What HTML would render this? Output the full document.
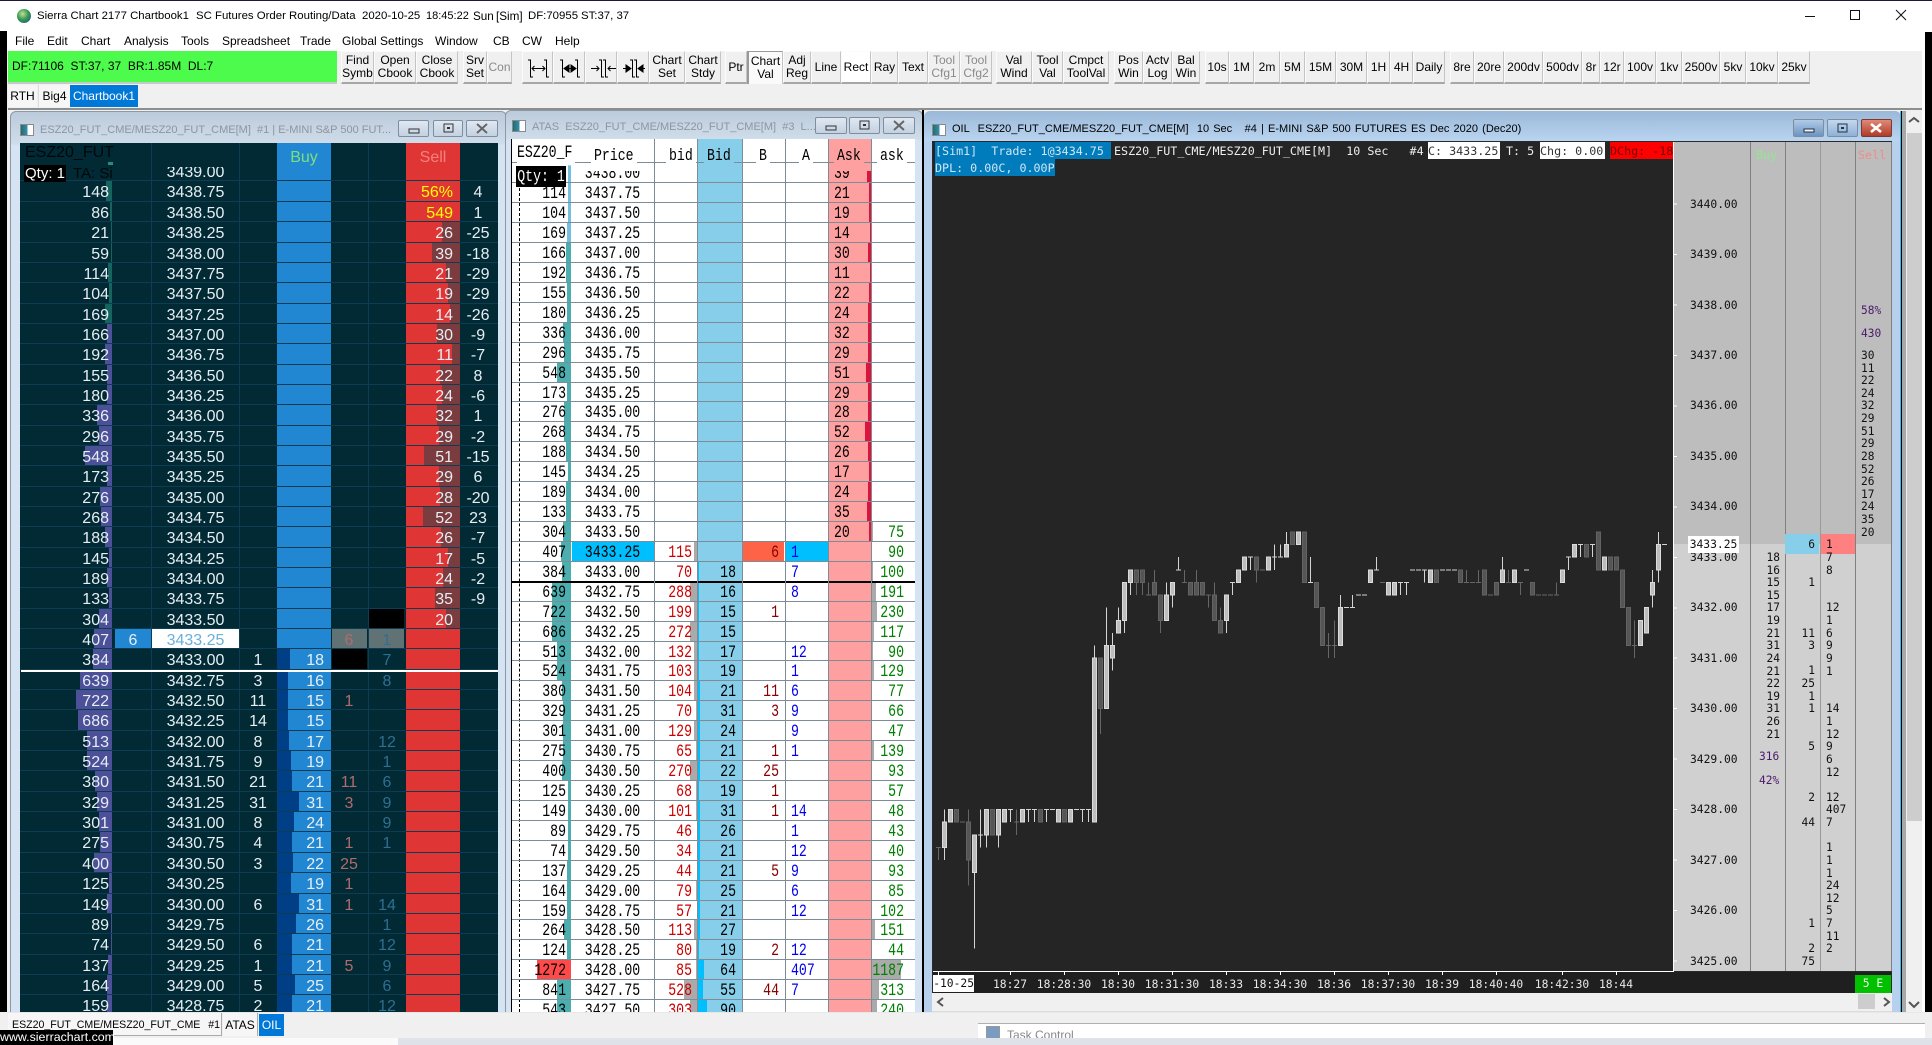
<!DOCTYPE html>
<html><head><meta charset="utf-8"><title>Sierra Chart</title>
<style>
html,body{margin:0;padding:0}
body{position:relative;width:1932px;height:1045px;overflow:hidden;background:#f0f0f0;font:12px "Liberation Sans",sans-serif;color:#000}
div,span,pre{position:absolute;margin:0;white-space:pre}
.rw{white-space:normal}
p{margin:0;position:relative;box-sizing:border-box}
i,b{font-style:normal;font-weight:normal;position:absolute;top:0;white-space:pre}
u{text-decoration:none;position:absolute;top:0;bottom:0}
.k{top:51px;height:33px;box-sizing:border-box;border:1px solid #fbfbfb;border-right:1px solid #c4c4c4;border-bottom:2px solid #a6a6a6;background:#f0f0f0;display:flex;align-items:center;justify-content:center;text-align:center;line-height:13px;font-size:12px;white-space:nowrap}
.dis{color:#8a8a8a}
.m{top:34px;font-size:12px}
.h{top:9px;font-size:11.7px;line-height:15px}
.wb{width:31px;height:17px;box-sizing:border-box;border:1px solid #7f8e9e;border-radius:2px;background:linear-gradient(#e0e8f2,#c3d1e1)}
.wb svg{position:absolute;left:0;top:0}
.ic{width:14px;height:12px;box-sizing:border-box;border:1px solid #8a8a8a;background:linear-gradient(90deg,#1f6f6f 0,#3a8fb0 55%,#fff 55%,#fff 100%)}
/* left ladder */
#l{left:20px;top:143px;width:478px;height:869px;overflow:hidden;background:#012a35;color:#e6eef2;font:16px/20px "Liberation Sans",sans-serif}
#l p{height:20.35px;border-bottom:1px solid #0e3c52}
#l i{top:2px}
#l .q{left:0;width:89px;text-align:right}
#l .p{left:132px;width:87px;text-align:center}
#l .t{left:219px;width:38px;text-align:center}
#l .u{left:257px;width:47px;text-align:right}
#l .b{left:311px;width:36px;text-align:center;color:#b06c6c}
#l .a{left:348px;width:38px;text-align:center;color:#2f6f92}
#l .s{left:386px;width:47px;text-align:right}
#l .d{left:440px;width:36px;text-align:center}
#l .g{right:386px;background:#16645f}
#l .v{right:386px;background:#4b5099}
#l .n{left:257px;background:#003f85}
#l .o{right:38px;background:#7a3c3e}
/* mid ladder */
#m{left:512px;top:139px;width:403px;height:873px;overflow:hidden;background:#fff;font:13.2px/19px "Liberation Mono",monospace;color:#000}
#m p{height:19.93px;border-bottom:1px solid #7e8c98}
#m i{top:1px;transform:scaleY(1.35)}
#m .q{left:0;width:54px;text-align:right}
#m .p{left:59px;width:83px;text-align:center}
#m .x{left:142px;width:38px;text-align:right;color:#cc0000}
#m .y{left:185px;width:39px;text-align:right}
#m .b{left:230px;width:37px;text-align:right;color:#8b0000}
#m .a{left:279px;width:40px;color:#0000ee}
#m .s{left:322px;width:30px}
#m .z{left:359px;width:33px;text-align:right;color:#008000}
#m .g{right:344px;background:#4caeae}
#m .lb{right:344px;background:#77bddd}
#m .r{right:218px;background:#aaa}
#m .c{left:185px;background:#00bfff}
#m .e{right:44px;background:#dc143c}
#m .f{left:359px;background:#aaa}
.tm{top:977px;color:#e8e8e8;font:11.3px/16px "DejaVu Sans Mono",monospace;transform:translateX(-50%)}
.mono{font:11.7px/18px "DejaVu Sans Mono",monospace}
pre.v{font:11.2px/12.62px "DejaVu Sans Mono",monospace;color:#111}
</style></head><body>

<!-- top title -->
<div style="left:0;top:0;width:1932px;height:51px;background:#fff"></div>
<div style="left:0;top:0;width:1932px;height:1px;background:#1c1c3a"></div>
<div style="left:17px;top:9px;width:14px;height:14px;border-radius:50%;background:radial-gradient(circle at 40% 35%,#bfe0a0,#3c9a4a 45%,#1d5f96 85%)"></div>
<div class="h" style="left:37px;font-size:11.4px">Sierra Chart 2177 Chartbook1</div><div class="h" style="left:196px;font-size:11.4px">SC Futures Order Routing/Data</div><div class="h" style="left:362px;font-size:11.4px">2020-10-25</div><div class="h" style="left:426px;font-size:11px">18:45:22</div><div class="h" style="left:473px">Sun</div><div class="h" style="left:496px">[Sim]</div><div class="h" style="left:528px;font-size:11.4px">DF:70955</div><div class="h" style="left:581px;font-size:11.4px">ST:37, 37</div>
<svg style="position:absolute;left:0;top:0" width="1932" height="40"><path d="M1805 16.5H1815M1850.5 10.5h9v9h-9zM1896 10l10 10M1906 10l-10 10" stroke="#111" fill="none"/></svg>
<div class="m" style="left:15px">File</div><div class="m" style="left:47px">Edit</div><div class="m" style="left:81px">Chart</div><div class="m" style="left:124px">Analysis</div><div class="m" style="left:181px">Tools</div><div class="m" style="left:222px">Spreadsheet</div><div class="m" style="left:300px">Trade</div><div class="m" style="left:342px">Global Settings</div><div class="m" style="left:435px">Window</div><div class="m" style="left:493px">CB</div><div class="m" style="left:522px">CW</div><div class="m" style="left:555px">Help</div>

<!-- toolbar -->
<div style="left:8px;top:51px;width:329px;height:31px;background:#4cfb4c;border-bottom:2px solid #c8c8c8;line-height:31px;text-indent:4px">DF:71106  ST:37, 37  BR:1.85M  DL:7</div>
<div class="k" style="left:341px;width:33px">Find<br>Symb</div>
<div class="k" style="left:374px;width:42px">Open<br>Cbook</div>
<div class="k" style="left:416px;width:42px">Close<br>Cbook</div>
<div class="k" style="left:463px;width:24px">Srv<br>Set</div>
<div class="k dis" style="left:487px;width:25px">Con</div>
<div class="k" style="left:522px;width:31px"></div><div class="k" style="left:553px;width:32px"></div><div class="k" style="left:585px;width:32px"></div><div class="k" style="left:617px;width:32px"></div>
<div class="k" style="left:649px;width:36px">Chart<br>Set</div>
<div class="k" style="left:685px;width:36px">Chart<br>Stdy</div>
<div class="k" style="left:725px;width:22px">Ptr</div>
<div class="k" style="left:747px;width:36px;background:#fafafa;border-left:2px solid #999;border-top:1px solid #999;border-bottom:0">Chart<br>Val</div>
<div class="k" style="left:783px;width:28px">Adj<br>Reg</div>
<div class="k" style="left:811px;width:30px">Line</div>
<div class="k" style="left:841px;width:30px;background:#fff">Rect</div>
<div class="k" style="left:871px;width:27px">Ray</div>
<div class="k" style="left:898px;width:30px">Text</div>
<div class="k dis" style="left:928px;width:32px">Tool<br>Cfg1</div>
<div class="k dis" style="left:960px;width:32px">Tool<br>Cfg2</div>
<div class="k" style="left:996px;width:36px">Val<br>Wind</div>
<div class="k" style="left:1032px;width:31px">Tool<br>Val</div>
<div class="k" style="left:1063px;width:46px">Cmpct<br>ToolVal</div>
<div class="k" style="left:1114px;width:29px">Pos<br>Win</div>
<div class="k" style="left:1143px;width:29px">Actv<br>Log</div>
<div class="k" style="left:1172px;width:28px">Bal<br>Win</div>
<div class="k" style="left:1205px;width:24px">10s</div><div class="k" style="left:1229px;width:25px">1M</div><div class="k" style="left:1254px;width:26px">2m</div><div class="k" style="left:1280px;width:25px">5M</div><div class="k" style="left:1305px;width:31px">15M</div><div class="k" style="left:1336px;width:31px">30M</div><div class="k" style="left:1367px;width:23px">1H</div><div class="k" style="left:1390px;width:23px">4H</div><div class="k" style="left:1413px;width:32px">Daily</div>
<div class="k" style="left:1450px;width:24px">8re</div><div class="k" style="left:1474px;width:30px">20re</div><div class="k" style="left:1504px;width:39px">200dv</div><div class="k" style="left:1543px;width:39px">500dv</div><div class="k" style="left:1582px;width:18px">8r</div><div class="k" style="left:1600px;width:24px">12r</div><div class="k" style="left:1624px;width:32px">100v</div><div class="k" style="left:1656px;width:26px">1kv</div><div class="k" style="left:1682px;width:38px">2500v</div><div class="k" style="left:1720px;width:26px">5kv</div><div class="k" style="left:1746px;width:32px">10kv</div><div class="k" style="left:1778px;width:32px">25kv</div>
<svg style="position:absolute;left:0;top:0" width="700" height="90" fill="none" stroke="#000"><path d="M530.5 60V77M528 60h3M530 77h3M546.5 60V77M544 60h3M546 77h3M532 68.5H545M534.5 66l-2.5 2.5 2.5 2.5M542.5 66l2.5 2.5-2.5 2.5"/><path d="M562.5 60V77M560 60h3M562 77h3M577.5 60V77M575 60h3M577 77h3M564 68.5H576"/><path d="M564 68.5l5-3.5v7zM576 68.5l-5-3.5v7z" fill="#000"/><path d="M601.5 60V77M599 60h3M601 77h3M605.5 60V77M603 60h3M605 77h3M591 68.5H599M596.5 66l2.5 2.5-2.5 2.5M616 68.5H608M610.5 66l-2.5 2.5 2.5 2.5"/><path d="M632.5 60V77M630 60h3M632 77h3M636.5 60V77M634 60h3M636 77h3M623 68.5H627M645 68.5H642"/><path d="M631 68.5l-5-3.5v7zM638 68.5l5-3.5v7z" fill="#000"/></svg>

<!-- tabs -->
<div style="left:8px;top:85px;width:29px;height:22px;background:#f6f6f6;line-height:22px;text-align:center">RTH</div>
<div style="left:38px;top:85px;width:31px;height:22px;background:#f6f6f6;border-left:1px solid #ddd;line-height:22px;text-align:center">Big4</div>
<div style="left:70px;top:85px;width:68px;height:22px;background:#0078d7;color:#fff;line-height:22px;text-align:center">Chartbook1</div>
<div style="left:8px;top:108px;width:1917px;height:2px;background:#8e8e8e"></div>

<!-- side black -->
<div style="left:0;top:31px;width:7px;height:1000px;background:#000"></div>
<div style="left:1925px;top:32px;width:7px;height:1000px;background:#000"></div>

<!-- window 1 frame -->
<div style="left:10px;top:111px;width:497px;height:901px;border-radius:6px 6px 0 0;background:linear-gradient(#bccbdb 0,#cfdcea 32px,#d5e3f2 33px);border:1px solid #8b98a6;border-bottom:0;box-sizing:border-box"></div>
<div class="ic" style="left:20px;top:124px"></div>
<div style="left:40px;top:122px;color:#8c96a2;font-size:11px;line-height:16px">ESZ20_FUT_CME/MESZ20_FUT_CME[M]  #1 | E-MINI S&amp;P 500 FUT...</div>
<div class="wb" style="left:398px;top:120px;width:31px"><svg width="29" height="15"><rect x="10" y="8" width="10" height="4" fill="none" stroke="#333"/></svg></div>
<div class="wb" style="left:433px;top:120px;width:30px"><svg width="28" height="15"><rect x="10" y="3" width="9" height="8" fill="none" stroke="#333"/><rect x="13" y="6" width="3" height="2" fill="#333"/></svg></div>
<div class="wb" style="left:466px;top:120px;width:32px"><svg width="30" height="15"><path d="M10 3l10 9M20 3l-10 9" stroke="#666" stroke-width="2"/></svg></div>

<!-- left ladder -->
<div id="l">
<div style="left:257px;top:0;width:54px;height:869px;background:#2287d2"></div>
<div style="left:386px;top:0;width:54px;height:869px;background:#e03535"></div>
<div style="left:131px;top:0;width:1px;height:869px;background:#0e3c52"></div>
<div style="left:219px;top:0;width:1px;height:869px;background:#0e3c52"></div>
<div style="left:348px;top:0;width:1px;height:869px;background:#0e3c52"></div>
<div class="rw" style="left:0;top:18.15px;width:478px">
<p><i class="p">3439.00</i></p>
<p><u class="g" style="width:6px"></u><i class="q">148</i><i class="p">3438.75</i><i class="s" style="color:#ff0">56%</i><i class="d">4</i></p>
<p><u class="g" style="width:2px"></u><i class="q">86</i><i class="p">3438.50</i><i class="s" style="color:#ff0">549</i><i class="d">1</i></p>
<p><u class="g" style="width:1px"></u><i class="q">21</i><i class="p">3438.25</i><u class="o" style="width:18px"></u><i class="s">26</i><i class="d">-25</i></p>
<p><u class="g" style="width:1px"></u><i class="q">59</i><i class="p">3438.00</i><u class="o" style="width:28px"></u><i class="s">39</i><i class="d">-18</i></p>
<p><u class="g" style="width:4px"></u><i class="q">114</i><i class="p">3437.75</i><u class="o" style="width:14px"></u><i class="s">21</i><i class="d">-29</i></p>
<p><u class="g" style="width:3px"></u><i class="q">104</i><i class="p">3437.50</i><u class="o" style="width:12px"></u><i class="s">19</i><i class="d">-29</i></p>
<p><u class="g" style="width:7px"></u><i class="q">169</i><i class="p">3437.25</i><u class="o" style="width:10px"></u><i class="s">14</i><i class="d">-26</i></p>
<p><u class="v" style="width:5px"></u><i class="q">166</i><i class="p">3437.00</i><u class="o" style="width:23px"></u><i class="s">30</i><i class="d">-9</i></p>
<p><u class="v" style="width:7px"></u><i class="q">192</i><i class="p">3436.75</i><u class="o" style="width:8px"></u><i class="s">11</i><i class="d">-7</i></p>
<p><u class="v" style="width:5px"></u><i class="q">155</i><i class="p">3436.50</i><u class="o" style="width:20px"></u><i class="s">22</i><i class="d">8</i></p>
<p><u class="v" style="width:5px"></u><i class="q">180</i><i class="p">3436.25</i><u class="o" style="width:18px"></u><i class="s">24</i><i class="d">-6</i></p>
<p><u class="v" style="width:15px"></u><i class="q">336</i><i class="p">3436.00</i><u class="o" style="width:23px"></u><i class="s">32</i><i class="d">1</i></p>
<p><u class="v" style="width:13px"></u><i class="q">296</i><i class="p">3435.75</i><u class="o" style="width:21px"></u><i class="s">29</i><i class="d">-2</i></p>
<p><u class="v" style="width:27px"></u><i class="q">548</i><i class="p">3435.50</i><u class="o" style="width:36px"></u><i class="s">51</i><i class="d">-15</i></p>
<p><u class="v" style="width:5px"></u><i class="q">173</i><i class="p">3435.25</i><u class="o" style="width:21px"></u><i class="s">29</i><i class="d">6</i></p>
<p><u class="v" style="width:12px"></u><i class="q">276</i><i class="p">3435.00</i><u class="o" style="width:20px"></u><i class="s">28</i><i class="d">-20</i></p>
<p><u class="v" style="width:11px"></u><i class="q">268</i><i class="p">3434.75</i><u class="o" style="width:37px"></u><i class="s">52</i><i class="d">23</i></p>
<p><u class="v" style="width:7px"></u><i class="q">188</i><i class="p">3434.50</i><u class="o" style="width:19px"></u><i class="s">26</i><i class="d">-7</i></p>
<p><u class="v" style="width:3px"></u><i class="q">145</i><i class="p">3434.25</i><u class="o" style="width:12px"></u><i class="s">17</i><i class="d">-5</i></p>
<p><u class="v" style="width:5px"></u><i class="q">189</i><i class="p">3434.00</i><u class="o" style="width:17px"></u><i class="s">24</i><i class="d">-2</i></p>
<p><u class="v" style="width:3px"></u><i class="q">133</i><i class="p">3433.75</i><u class="o" style="width:25px"></u><i class="s">35</i><i class="d">-9</i></p>
<p><u class="v" style="width:13px"></u><i class="q">304</i><i class="p">3433.50</i><u style="left:349px;width:35px;background:#000"></u><u class="o" style="width:14px"></u><i class="s">20</i></p>
<p><u class="v" style="width:18px"></u><i class="q">407</i><u style="left:95px;width:36px;background:#2287d2"></u><i style="left:95px;width:36px;text-align:center">6</i><u style="left:132px;width:87px;background:#fff"></u><i class="p" style="color:#6ab0d8">3433.25</i><u style="left:312px;width:35px;background:#607274"></u><i class="b">6</i><u style="left:349px;width:35px;background:#607274"></u><i class="a">1</i></p>
<p><u class="v" style="width:19px"></u><i class="q">384</i><i class="p">3433.00</i><i class="t">1</i><u class="n" style="width:13px"></u><i class="u">18</i><u style="left:312px;width:35px;background:#000"></u><i class="a">7</i></p>
<p><u class="v" style="width:32px"></u><i class="q">639</i><i class="p">3432.75</i><i class="t">3</i><u class="n" style="width:11px"></u><i class="u">16</i><i class="a">8</i></p>
<p><u class="v" style="width:36px"></u><i class="q">722</i><i class="p">3432.50</i><i class="t">11</i><u class="n" style="width:11px"></u><i class="u">15</i><i class="b">1</i></p>
<p><u class="v" style="width:34px"></u><i class="q">686</i><i class="p">3432.25</i><i class="t">14</i><u class="n" style="width:11px"></u><i class="u">15</i></p>
<p><u class="v" style="width:25px"></u><i class="q">513</i><i class="p">3432.00</i><i class="t">8</i><u class="n" style="width:12px"></u><i class="u">17</i><i class="a">12</i></p>
<p><u class="v" style="width:25px"></u><i class="q">524</i><i class="p">3431.75</i><i class="t">9</i><u class="n" style="width:14px"></u><i class="u">19</i><i class="a">1</i></p>
<p><u class="v" style="width:17px"></u><i class="q">380</i><i class="p">3431.50</i><i class="t">21</i><u class="n" style="width:15px"></u><i class="u">21</i><i class="b">11</i><i class="a">6</i></p>
<p><u class="v" style="width:15px"></u><i class="q">329</i><i class="p">3431.25</i><i class="t">31</i><u class="n" style="width:22px"></u><i class="u">31</i><i class="b">3</i><i class="a">9</i></p>
<p><u class="v" style="width:13px"></u><i class="q">301</i><i class="p">3431.00</i><i class="t">8</i><u class="n" style="width:17px"></u><i class="u">24</i><i class="a">9</i></p>
<p><u class="v" style="width:12px"></u><i class="q">275</i><i class="p">3430.75</i><i class="t">4</i><u class="n" style="width:15px"></u><i class="u">21</i><i class="b">1</i><i class="a">1</i></p>
<p><u class="v" style="width:18px"></u><i class="q">400</i><i class="p">3430.50</i><i class="t">3</i><u class="n" style="width:16px"></u><i class="u">22</i><i class="b">25</i></p>
<p><u class="v" style="width:3px"></u><i class="q">125</i><i class="p">3430.25</i><u class="n" style="width:14px"></u><i class="u">19</i><i class="b">1</i></p>
<p><u class="v" style="width:5px"></u><i class="q">149</i><i class="p">3430.00</i><i class="t">6</i><u class="n" style="width:22px"></u><i class="u">31</i><i class="b">1</i><i class="a">14</i></p>
<p><u class="v" style="width:1px"></u><i class="q">89</i><i class="p">3429.75</i><u class="n" style="width:19px"></u><i class="u">26</i><i class="a">1</i></p>
<p><u class="v" style="width:1px"></u><i class="q">74</i><i class="p">3429.50</i><i class="t">6</i><u class="n" style="width:15px"></u><i class="u">21</i><i class="a">12</i></p>
<p><u class="v" style="width:4px"></u><i class="q">137</i><i class="p">3429.25</i><i class="t">1</i><u class="n" style="width:15px"></u><i class="u">21</i><i class="b">5</i><i class="a">9</i></p>
<p><u class="v" style="width:5px"></u><i class="q">164</i><i class="p">3429.00</i><i class="t">5</i><u class="n" style="width:18px"></u><i class="u">25</i><i class="a">6</i></p>
<p><u class="v" style="width:5px"></u><i class="q">159</i><i class="p">3428.75</i><i class="t">2</i><u class="n" style="width:15px"></u><i class="u">21</i><i class="a">12</i></p>
</div>
<div style="left:1px;top:527px;width:477px;height:2px;background:#fff"></div>
<div style="left:0;top:0;width:478px;height:24px;background:#012a35;overflow:hidden">
<div style="left:257px;top:0;width:54px;height:24px;background:#2287d2;color:#7be07b;text-align:center;line-height:29px">Buy</div>
<div style="left:386px;top:0;width:54px;height:24px;background:#e03535;color:#f58080;text-align:center;line-height:29px">Sell</div>
<div style="left:131px;top:0;width:1px;height:24px;background:#0e3c52"></div><div style="left:219px;top:0;width:1px;height:24px;background:#0e3c52"></div><div style="left:348px;top:0;width:1px;height:24px;background:#0e3c52"></div>
</div>
<div style="left:5px;top:0;width:89px;height:20px;overflow:hidden;color:#00080c;line-height:19px;font-size:16px">ESZ20_FUT_CME</div>
<div style="left:88px;top:19px;width:5px;height:3px;background:#2a8a80"></div>
<div style="left:4px;top:22px;width:42px;height:17px;background:#000;color:#fff;line-height:17px;font-size:15px;text-align:center">Qty: 1</div>
<div style="left:53px;top:22px;width:40px;height:17px;overflow:hidden;color:#00080c;line-height:17px;font-size:15px">TA: Sim</div>
</div>

<!-- window 2 frame -->
<div style="left:505px;top:110px;width:418px;height:902px;border-radius:6px 6px 0 0;background:linear-gradient(#bccbdb 0,#cfdcea 28px,#d5e3f2 29px);border:1px solid #8b98a6;border-bottom:0;box-sizing:border-box"></div>
<div class="ic" style="left:512px;top:120px"></div>
<div style="left:532px;top:119px;color:#8c96a2;font-size:11px;line-height:16px">ATAS  ESZ20_FUT_CME/MESZ20_FUT_CME[M]  #3  L...</div>
<div class="wb" style="left:815px;top:117px;width:32px"><svg width="30" height="15"><rect x="10" y="8" width="10" height="4" fill="none" stroke="#333"/></svg></div>
<div class="wb" style="left:849px;top:117px"><svg width="29" height="15"><rect x="10" y="3" width="9" height="8" fill="none" stroke="#333"/><rect x="13" y="6" width="3" height="2" fill="#333"/></svg></div>
<div class="wb" style="left:883px;top:117px;width:32px"><svg width="30" height="15"><path d="M10 3l10 9M20 3l-10 9" stroke="#666" stroke-width="2"/></svg></div>
<div style="left:511px;top:139px;width:1px;height:873px;background:#000"></div>

<!-- mid ladder -->
<div id="m">
<div style="left:185px;top:0;width:45px;height:873px;background:#87ceeb"></div>
<div style="left:317px;top:0;width:42px;height:873px;background:#ffa0a0"></div>
<div style="left:7px;top:24px;width:0;height:849px;border-left:1px dashed #000"></div>
<div class="rw" style="left:0;top:24.4px;width:403px">
<p><u class="lb" style="width:3px"></u><i class="p">3438.00</i><u class="e" style="width:4px"></u><i class="s">39</i></p>
<p><u class="lb" style="width:3px"></u><i class="q">114</i><i class="p">3437.75</i><u class="e" style="width:2px"></u><i class="s">21</i></p>
<p><u class="lb" style="width:3px"></u><i class="q">104</i><i class="p">3437.50</i><u class="e" style="width:2px"></u><i class="s">19</i></p>
<p><u class="lb" style="width:4px"></u><i class="q">169</i><i class="p">3437.25</i><u class="e" style="width:1px"></u><i class="s">14</i></p>
<p><u class="g" style="width:5px"></u><i class="q">166</i><i class="p">3437.00</i><u class="e" style="width:3px"></u><i class="s">30</i></p>
<p><u class="g" style="width:5px"></u><i class="q">192</i><i class="p">3436.75</i><u class="e" style="width:1px"></u><i class="s">11</i></p>
<p><u class="g" style="width:4px"></u><i class="q">155</i><i class="p">3436.50</i><u class="e" style="width:2px"></u><i class="s">22</i></p>
<p><u class="g" style="width:4px"></u><i class="q">180</i><i class="p">3436.25</i><u class="e" style="width:3px"></u><i class="s">24</i></p>
<p><u class="g" style="width:8px"></u><i class="q">336</i><i class="p">3436.00</i><u class="e" style="width:3px"></u><i class="s">32</i></p>
<p><u class="g" style="width:7px"></u><i class="q">296</i><i class="p">3435.75</i><u class="e" style="width:3px"></u><i class="s">29</i></p>
<p><u class="g" style="width:14px"></u><i class="q">548</i><i class="p">3435.50</i><u class="e" style="width:5px"></u><i class="s">51</i></p>
<p><u class="g" style="width:4px"></u><i class="q">173</i><i class="p">3435.25</i><u class="e" style="width:3px"></u><i class="s">29</i></p>
<p><u class="g" style="width:7px"></u><i class="q">276</i><i class="p">3435.00</i><u class="e" style="width:3px"></u><i class="s">28</i></p>
<p><u class="g" style="width:7px"></u><i class="q">268</i><i class="p">3434.75</i><u class="e" style="width:6px"></u><i class="s">52</i></p>
<p><u class="g" style="width:5px"></u><i class="q">188</i><i class="p">3434.50</i><u class="e" style="width:3px"></u><i class="s">26</i></p>
<p><u class="g" style="width:3px"></u><i class="q">145</i><i class="p">3434.25</i><u class="e" style="width:2px"></u><i class="s">17</i></p>
<p><u class="g" style="width:5px"></u><i class="q">189</i><i class="p">3434.00</i><u class="e" style="width:3px"></u><i class="s">24</i></p>
<p><u class="g" style="width:5px"></u><i class="q">133</i><i class="p">3433.75</i><u class="e" style="width:4px"></u><i class="s">35</i></p>
<p><u class="g" style="width:8px"></u><i class="q">304</i><i class="p">3433.50</i><u class="e" style="width:2px"></u><i class="s">20</i><u class="f" style="width:2px"></u><i class="z">75</i></p>
<p><u class="g" style="width:10px"></u><i class="q">407</i><u style="left:60px;width:82px;background:#00bfff"></u><i class="p">3433.25</i><u class="r" style="width:3px"></u><i class="x">115</i><u style="left:231px;width:41px;background:#ff6347"></u><i class="b">6</i><u style="left:274px;width:43px;background:#00bfff"></u><i class="a">1</i><u class="f" style="width:1px"></u><i class="z">90</i></p>
<p><u class="g" style="width:9px"></u><i class="q">384</i><i class="p">3433.00</i><i class="x">70</i><u class="c" style="width:2px"></u><i class="y">18</i><i class="a">7</i><u class="f" style="width:2px"></u><i class="z">100</i></p>
<p><u class="g" style="width:19px"></u><i class="q">639</i><i class="p">3432.75</i><u class="r" style="width:7px"></u><i class="x">288</i><u class="c" style="width:2px"></u><i class="y">16</i><i class="a">8</i><u class="f" style="width:5px"></u><i class="z">191</i></p>
<p><u class="g" style="width:19px"></u><i class="q">722</i><i class="p">3432.50</i><u class="r" style="width:3px"></u><i class="x">199</i><u class="c" style="width:2px"></u><i class="y">15</i><i class="b">1</i><u class="f" style="width:6px"></u><i class="z">230</i></p>
<p><u class="g" style="width:19px"></u><i class="q">686</i><i class="p">3432.25</i><u class="r" style="width:7px"></u><i class="x">272</i><u class="c" style="width:2px"></u><i class="y">15</i><u class="f" style="width:3px"></u><i class="z">117</i></p>
<p><u class="g" style="width:14px"></u><i class="q">513</i><i class="p">3432.00</i><u class="r" style="width:3px"></u><i class="x">132</i><u class="c" style="width:2px"></u><i class="y">17</i><i class="a">12</i><u class="f" style="width:2px"></u><i class="z">90</i></p>
<p><u class="g" style="width:14px"></u><i class="q">524</i><i class="p">3431.75</i><u class="r" style="width:3px"></u><i class="x">103</i><u class="c" style="width:2px"></u><i class="y">19</i><i class="a">1</i><u class="f" style="width:3px"></u><i class="z">129</i></p>
<p><u class="g" style="width:9px"></u><i class="q">380</i><i class="p">3431.50</i><u class="r" style="width:3px"></u><i class="x">104</i><u class="c" style="width:3px"></u><i class="y">21</i><i class="b">11</i><i class="a">6</i><u class="f" style="width:1px"></u><i class="z">77</i></p>
<p><u class="g" style="width:8px"></u><i class="q">329</i><i class="p">3431.25</i><u class="r" style="width:1px"></u><i class="x">70</i><u class="c" style="width:3px"></u><i class="y">31</i><i class="b">3</i><i class="a">9</i><u class="f" style="width:1px"></u><i class="z">66</i></p>
<p><u class="g" style="width:8px"></u><i class="q">301</i><i class="p">3431.00</i><u class="r" style="width:3px"></u><i class="x">129</i><u class="c" style="width:3px"></u><i class="y">24</i><i class="a">9</i><i class="z">47</i></p>
<p><u class="g" style="width:8px"></u><i class="q">275</i><i class="p">3430.75</i><u class="r" style="width:1px"></u><i class="x">65</i><u class="c" style="width:3px"></u><i class="y">21</i><i class="b">1</i><i class="a">1</i><u class="f" style="width:3px"></u><i class="z">139</i></p>
<p><u class="g" style="width:9px"></u><i class="q">400</i><i class="p">3430.50</i><u class="r" style="width:7px"></u><i class="x">270</i><u class="c" style="width:3px"></u><i class="y">22</i><i class="b">25</i><u class="f" style="width:1px"></u><i class="z">93</i></p>
<p><u class="g" style="width:3px"></u><i class="q">125</i><i class="p">3430.25</i><u class="r" style="width:1px"></u><i class="x">68</i><u class="c" style="width:2px"></u><i class="y">19</i><i class="b">1</i><u class="f" style="width:1px"></u><i class="z">57</i></p>
<p><u class="g" style="width:3px"></u><i class="q">149</i><i class="p">3430.00</i><u class="r" style="width:1px"></u><i class="x">101</i><u class="c" style="width:3px"></u><i class="y">31</i><i class="b">1</i><i class="a">14</i><u class="f" style="width:1px"></u><i class="z">48</i></p>
<p><u class="g" style="width:3px"></u><i class="q">89</i><i class="p">3429.75</i><i class="x">46</i><u class="c" style="width:3px"></u><i class="y">26</i><i class="a">1</i><i class="z">43</i></p>
<p><u class="g" style="width:3px"></u><i class="q">74</i><i class="p">3429.50</i><i class="x">34</i><u class="c" style="width:3px"></u><i class="y">21</i><i class="a">12</i><i class="z">40</i></p>
<p><u class="g" style="width:4px"></u><i class="q">137</i><i class="p">3429.25</i><i class="x">44</i><u class="c" style="width:3px"></u><i class="y">21</i><i class="b">5</i><i class="a">9</i><u class="f" style="width:1px"></u><i class="z">93</i></p>
<p><u class="g" style="width:4px"></u><i class="q">164</i><i class="p">3429.00</i><u class="r" style="width:1px"></u><i class="x">79</i><u class="c" style="width:3px"></u><i class="y">25</i><i class="a">6</i><u class="f" style="width:1px"></u><i class="z">85</i></p>
<p><u class="g" style="width:4px"></u><i class="q">159</i><i class="p">3428.75</i><i class="x">57</i><u class="c" style="width:3px"></u><i class="y">21</i><i class="a">12</i><u class="f" style="width:1px"></u><i class="z">102</i></p>
<p><u class="g" style="width:7px"></u><i class="q">264</i><i class="p">3428.50</i><u class="r" style="width:3px"></u><i class="x">113</i><u class="c" style="width:3px"></u><i class="y">27</i><u class="f" style="width:4px"></u><i class="z">151</i></p>
<p><u class="g" style="width:4px"></u><i class="q">124</i><i class="p">3428.25</i><u class="r" style="width:1px"></u><i class="x">80</i><u class="c" style="width:2px"></u><i class="y">19</i><i class="b">2</i><i class="a">12</i><i class="z">44</i></p>
<p><u style="right:344px;width:34px;background:#ff4a4a"></u><i class="q">1272</i><i class="p">3428.00</i><u class="r" style="width:1px"></u><i class="x">85</i><u class="c" style="width:7px"></u><i class="y">64</i><i class="a">407</i><u class="f" style="width:30px"></u><i class="z">1187</i></p>
<p><u class="g" style="width:14px"></u><i class="q">841</i><i class="p">3427.75</i><u class="r" style="width:13px"></u><i class="x">528</i><u class="c" style="width:6px"></u><i class="y">55</i><i class="b">44</i><i class="a">7</i><u class="f" style="width:8px"></u><i class="z">313</i></p>
<p><u class="g" style="width:14px"></u><i class="q">543</i><i class="p">3427.50</i><u class="r" style="width:7px"></u><i class="x">303</i><u class="c" style="width:10px"></u><i class="y">90</i><u class="f" style="width:6px"></u><i class="z">240</i></p>
</div>
<div style="left:0;top:442px;width:403px;height:2px;background:#000"></div>
<div style="left:0;top:0;width:403px;height:32px;background:#fff;overflow:hidden">
<div style="left:0;top:23px;width:403px;height:1px;background:#7e8c98"></div>
<div style="left:185px;top:0;width:45px;height:32px;background:#87ceeb"></div>
<div style="left:317px;top:0;width:42px;height:32px;background:#ffa0a0"></div>
<div style="left:0;top:23px;width:403px;height:1px;background:#7e8c98"></div>
</div>
<div style="left:142px;top:0;width:1px;height:873px;background:#7e8c98"></div>
<div style="left:185px;top:0;width:1px;height:873px;background:#7e8c98"></div>
<div style="left:230px;top:0;width:1px;height:873px;background:#7e8c98"></div>
<div style="left:273px;top:0;width:1px;height:873px;background:#7e8c98"></div>
<div style="left:316px;top:0;width:1px;height:873px;background:#7e8c98"></div>
<div style="left:359px;top:0;width:1px;height:873px;background:#7e8c98"></div>
<div style="left:56px;top:24px;width:3px;height:8px;background:#77bddd"></div>
<div style="left:5px;top:4px;line-height:19px;transform:scaleY(1.35);background:#fff;padding-right:3px">ESZ20_F</div>
<div style="left:79px;top:9px;line-height:15px;transform:scaleY(1.25);background:#fff;padding:0 3px">Price</div>
<div style="left:154px;top:9px;line-height:15px;transform:scaleY(1.25);background:#fff;padding:0 3px">bid</div>
<div style="left:192px;top:9px;line-height:15px;transform:scaleY(1.25);background:#87ceeb;padding:0 3px">Bid</div>
<div style="left:244px;top:9px;line-height:15px;transform:scaleY(1.25);background:#fff;padding:0 3px">B</div>
<div style="left:287px;top:9px;line-height:15px;transform:scaleY(1.25);background:#fff;padding:0 3px">A</div>
<div style="left:322px;top:9px;line-height:15px;transform:scaleY(1.25);background:#ffa0a0;padding:0 3px">Ask</div>
<div style="left:365px;top:9px;line-height:15px;transform:scaleY(1.25);background:#fff;padding:0 3px">ask</div>
<div style="left:4px;top:27px;width:50px;height:21px;background:#000;color:#fff;line-height:21px;text-align:center"><span style="position:static;display:inline-block;transform:scaleY(1.25)">Qty: 1</span></div>
</div>

<!-- window 3 frame -->
<div style="left:922px;top:110px;width:2px;height:902px;background:#000"></div>
<div style="left:924px;top:111px;width:977px;height:901px;border-radius:6px 6px 0 0;background:linear-gradient(#9ab8d8 0,#b8d4f0 30px,#b6d0ee 31px)"></div>
<div style="left:1901px;top:111px;width:1px;height:901px;background:#000"></div>
<div style="left:1900px;top:111px;width:1px;height:901px;background:#27c0f0"></div>
<div style="left:1902px;top:111px;width:4px;height:901px;background:#a8a8a8"></div>
<div class="ic" style="left:932px;top:124px"></div>
<div style="left:952px;top:121px;font-size:11px;word-spacing:1.1px;line-height:16px">OIL  ESZ20_FUT_CME/MESZ20_FUT_CME[M]  10 Sec   #4 | E-MINI S&amp;P 500 FUTURES ES Dec 2020 (Dec20)</div>
<div class="wb" style="left:1793px;top:119px;width:31px;height:18px;background:linear-gradient(#b0cbe8,#6d94c0)"><svg width="29" height="16"><rect x="10" y="9" width="10" height="3" fill="#f4f4f4" stroke="#234"/></svg></div>
<div class="wb" style="left:1827px;top:119px;height:18px;background:linear-gradient(#c4d8ee,#8eb0d6)"><svg width="29" height="16"><rect x="10" y="4" width="9" height="8" fill="none" stroke="#234"/><rect x="13" y="7" width="3" height="2" fill="#234"/></svg></div>
<div class="wb" style="left:1861px;top:119px;height:18px;background:linear-gradient(#e08a78,#b03a28);border-color:#7a3a30"><svg width="29" height="16"><path d="M9 4l10 8M19 4l-10 8" stroke="#fff" stroke-width="2.6"/></svg></div>

<!-- chart -->
<div style="left:932px;top:141px;width:960px;height:853px;background:#2a2a2a"></div>
<div style="left:933px;top:142px;width:741px;height:829px;background:#252525"></div>
<div style="left:1674px;top:142px;width:217px;height:402px;background:#bdbdbd"></div>
<div style="left:1674px;top:544px;width:217px;height:427px;background:#d0d0d0"></div>
<div style="left:1673px;top:142px;width:1px;height:830px;background:#fff"></div>
<div style="left:933px;top:971px;width:741px;height:1px;background:#fff"></div>
<div style="left:933px;top:972px;width:958px;height:21px;background:#1f1f1f"></div>
<div style="left:1750px;top:142px;width:1px;height:829px;background:#808080"></div>
<div style="left:1785px;top:142px;width:1px;height:829px;background:#808080"></div>
<div style="left:1820px;top:142px;width:1px;height:829px;background:#9a9a9a"></div>
<div style="left:1855px;top:142px;width:1px;height:829px;background:#808080"></div>
<div style="left:1891px;top:142px;width:1px;height:829px;background:#808080"></div>
<div style="left:1785px;top:534px;width:34px;height:20px;background:#87ceeb"></div>
<div style="left:1821px;top:534px;width:34px;height:20px;background:#ff8080"></div>

<svg style="position:absolute;left:0;top:0" width="1932" height="1045" shape-rendering="crispEdges">
<path d="M1674 204h3M1674 254.5h3M1674 305h3M1674 355.5h3M1674 406h3M1674 456.5h3M1674 507h3M1674 557.5h3M1674 608h3M1674 658h3M1674 708.5h3M1674 759h3M1674 809.5h3M1674 860h3M1674 910.5h3M1674 961h3M938.5 972v3M1010.5 972v3M1064.5 972v3M1118.5 972v3M1172.5 972v3M1226.5 972v3M1280.5 972v3M1334.5 972v3M1388.5 972v3M1442.5 972v3M1496.5 972v3M1562.5 972v3M1616.5 972v3" stroke="#fff" fill="none"/>
<g transform="translate(938.5,961) scale(6,-12.62)" fill="none">
<path vector-effect="non-scaling-stroke" stroke="#d4d4d4" stroke-width="1" d="M1 8V12M6 1V7M7 9V12M6.58 10h.84M8 9V10M10 9V10M12 11V12M11.58 12h.84M15 11V12M14.58 12h.84M16 11V12M15.58 12h.84M18 11V12M17.58 12h.84M18.58 12h.84M22.58 12h.84M24 11V12M23.58 12h.84M25 11V12M24.58 12h.84M26 24V25M28 25V28M29 23V26M30 27V28M31 26V27M32 29V30M38 29V30M39 28V29M40 31V32M39.58 31h.84M48 26V27M49 29V30M48.58 30h.84M52 31V32M51.58 32h.84M56 31V33M55.58 32h.84M57 32V33M56.58 32h.84M58 33V34M62 30V32M61.58 30h.84M67 28V29M67.58 28h.84M69 28V29M68.58 28h.84M69.58 29h.84M70.58 29h.84M73 31V32M72.58 31h.84M77 29V30M76.58 30h.84M78 29V30M77.58 30h.84M78.58 31h.84M79.58 31h.84M81 30V31M80.58 31h.84M83.58 31h.84M84.58 31h.84M85.58 31h.84M94 31V32M97.58 31h.84M105 31V32M104.58 32h.84M107 32V33M106.58 33h.84M109 32V33M108.58 33h.84M119 28V31M120 30V34M120.58 33h.84"/>
<path vector-effect="non-scaling-stroke" stroke="#666" stroke-width="1" d="M0 8V9M-.42 9h.84M3.58 11h.84M5 6V12M13 10V12M12.58 11h.84M27 18V20M33 29V30M34 29V30M35 29V30M34.58 29h.84M36 30V31M37 26V27M41 30V31M40.58 30h.84M43 30V31M45 28V29M44.58 29h.84M46 29V30M47 27V28M53 30V31M53.58 31h.84M65 24V26M64.58 25h.84M66 24V27M65.58 25h.84M73.58 30h.84M88 30V31M87.58 30h.84M88.58 30h.84M90 30V31M89.58 30h.84M91.58 29h.84M95 30V31M94.58 30h.84M97 29V30M96.58 30h.84M99.58 29h.84M100.58 29h.84M101.58 29h.84M103 29V30M102.58 29h.84M116 24V27M115.58 25h.84"/>
<path vector-effect="non-scaling-stroke" fill="#bdbdbd" stroke="#dcdcdc" stroke-width="1" d="M.67 9h.66V11h-.66zM1.67 11h.66V12h-.66zM5.67 7h.66V10h-.66zM7.67 10h.66V12h-.66zM9.67 10h.66V12h-.66zM10.67 11h.66V12h-.66zM13.67 11h.66V12h-.66zM19.67 11h.66V12h-.66zM21.67 11h.66V12h-.66zM25.67 11h.66V24h-.66zM27.67 20h.66V25h-.66zM28.67 24h.66V25h-.66zM29.67 26h.66V27h-.66zM30.67 27h.66V30h-.66zM31.67 30h.66V31h-.66zM37.67 27h.66V29h-.66zM38.67 29h.66V30h-.66zM47.67 27h.66V29h-.66zM49.67 30h.66V31h-.66zM50.67 31h.66V32h-.66zM54.67 31h.66V32h-.66zM57.67 32h.66V33h-.66zM59.67 33h.66V34h-.66zM66.67 25h.66V28h-.66zM71.67 30h.66V31h-.66zM74.67 29h.66V30h-.66zM75.67 29h.66V30h-.66zM81.67 30h.66V31h-.66zM93.67 30h.66V31h-.66zM95.67 30h.66V31h-.66zM103.67 30h.66V31h-.66zM105.67 32h.66V33h-.66zM110.67 31h.66V32h-.66zM116.67 25h.66V27h-.66zM117.67 26h.66V28h-.66zM118.67 29h.66V30h-.66zM119.67 31h.66V33h-.66z"/>
<path vector-effect="non-scaling-stroke" fill="#555" stroke="#636363" stroke-width="1" d="M2.67 11h.66V12h-.66zM4.67 8h.66V11h-.66zM8.67 10h.66V12h-.66zM16.67 11h.66V12h-.66zM20.67 11h.66V12h-.66zM26.67 20h.66V24h-.66zM32.67 30h.66V31h-.66zM33.67 30h.66V31h-.66zM35.67 29h.66V30h-.66zM36.67 27h.66V29h-.66zM41.67 29h.66V30h-.66zM42.67 29h.66V30h-.66zM43.67 29h.66V30h-.66zM45.67 27h.66V29h-.66zM46.67 26h.66V27h-.66zM52.67 31h.66V32h-.66zM58.67 33h.66V34h-.66zM60.67 30h.66V34h-.66zM62.67 28h.66V30h-.66zM63.67 25h.66V28h-.66zM82.67 30h.66V31h-.66zM86.67 30h.66V31h-.66zM90.67 29h.66V31h-.66zM92.67 29h.66V30h-.66zM98.67 29h.66V30h-.66zM107.67 32h.66V33h-.66zM109.67 31h.66V34h-.66zM111.67 31h.66V32h-.66zM112.67 31h.66V32h-.66zM113.67 28h.66V31h-.66zM114.67 25h.66V28h-.66z"/>
</g></svg>

<!-- chart text -->
<div class="mono" style="left:935px;top:142px;width:176px;height:17px;background:#007cbc;color:#cfe6f5">[Sim1]  Trade: 1@3434.75</div>
<div class="mono" style="left:1114px;top:142px;color:#eee">ESZ20_FUT_CME/MESZ20_FUT_CME[M]  10 Sec   #4</div>
<div class="mono" style="left:1428px;top:142px;width:72px;height:17px;background:#fff;color:#333">C: 3433.25</div>
<div class="mono" style="left:1506px;top:142px;color:#eee">T: 5</div>
<div class="mono" style="left:1540px;top:142px;width:65px;height:17px;background:#fff;color:#333">Chg: 0.00</div>
<div class="mono" style="left:1610px;top:142px;width:63px;height:17px;background:#f00;color:#700;overflow:hidden">DChg: -18</div>
<div class="mono" style="left:935px;top:159px;width:120px;height:17px;background:#007cbc;color:#cfe6f5">DPL: 0.00C, 0.00P</div>

<div style="left:1756px;top:147px;color:#8fe88f;font:11.7px/17px 'DejaVu Sans Mono',monospace">Buy</div>
<div style="left:1858px;top:147px;color:#f08c8c;font:11.7px/17px 'DejaVu Sans Mono',monospace">Sell</div>

<pre style="left:1690px;top:179.6px;font:11.3px/50.47px 'DejaVu Sans Mono',monospace;color:#111">3440.00
3439.00
3438.00
3437.00
3436.00
3435.00
3434.00
3433.00
3432.00
3431.00
3430.00
3429.00
3428.00
3427.00
3426.00
3425.00</pre>
<div style="left:1688px;top:536px;width:51px;height:17px;background:#fff;font:11.3px/17px 'DejaVu Sans Mono',monospace;text-align:center;color:#111">3433.25</div>

<pre class="v" style="left:1750px;width:30px;top:551.9px;text-align:right">18
16
15
15
17
19
21
31
24
21
22
19
31
26
21</pre>
<div style="left:1759px;top:750px;font:11.2px/14px 'DejaVu Sans Mono',monospace;color:#4a1a6a">316</div>
<div style="left:1759px;top:774px;font:11.2px/14px 'DejaVu Sans Mono',monospace;color:#4a1a6a">42%</div>
<pre class="v" style="left:1785px;width:30px;top:577.1px;text-align:right">1



11
3

1
25
1
1


5



2

44







1

2
75</pre>
<div style="left:1785px;top:535px;width:30px;height:20px;font:11.2px/20px 'DejaVu Sans Mono',monospace;text-align:right;color:#111">6</div>
<div style="left:1826px;top:535px;font:11.2px/20px 'DejaVu Sans Mono',monospace;color:#111">1</div>
<pre class="v" style="left:1826px;top:551.9px">7
8


12
1
6
9
9
1


14
1
12
9
6
12

12
407
7

1
1
1
24
12
5
7
11
2</pre>
<div style="left:1861px;top:304px;font:11.2px/14px 'DejaVu Sans Mono',monospace;color:#4a1a6a">58%</div>
<div style="left:1861px;top:327px;font:11.2px/14px 'DejaVu Sans Mono',monospace;color:#4a1a6a">430</div>
<pre class="v" style="left:1861px;top:349.9px">30
11
22
24
32
29
51
29
28
52
26
17
24
35
20</pre>

<div style="left:933px;top:975px;width:41px;height:17px;background:#fff;color:#111;font:11.3px/17px 'DejaVu Sans Mono',monospace;text-align:right">-10-25</div>
<span class="tm" style="left:1010px">18:27</span><span class="tm" style="left:1064px">18:28:30</span><span class="tm" style="left:1118px">18:30</span><span class="tm" style="left:1172px">18:31:30</span><span class="tm" style="left:1226px">18:33</span><span class="tm" style="left:1280px">18:34:30</span><span class="tm" style="left:1334px">18:36</span><span class="tm" style="left:1388px">18:37:30</span><span class="tm" style="left:1442px">18:39</span><span class="tm" style="left:1496px">18:40:40</span><span class="tm" style="left:1562px">18:42:30</span><span class="tm" style="left:1616px">18:44</span>
<div style="left:1855px;top:975px;width:36px;height:18px;background:#00c000;color:#eaffea;font:11.3px/18px 'DejaVu Sans Mono',monospace;text-align:center">5 E</div>

<!-- chart hscroll -->
<div style="left:932px;top:993px;width:960px;height:18px;background:#f0f0f0;border-bottom:1px solid #dcdcdc"></div>
<div style="left:1858px;top:994px;width:17px;height:15px;background:#cdcdcd"></div>
<svg style="position:absolute;left:930px;top:990px" width="970" height="22" fill="none" stroke="#555" stroke-width="2"><path d="M13 8l-5 4 5 4M954 8l5 4-5 4"/></svg>

<!-- MDI vertical scrollbar -->
<div style="left:1906px;top:111px;width:16px;height:901px;background:#f0f0f0"></div>
<div style="left:1907px;top:133px;width:15px;height:688px;background:#cdcdcd"></div>
<svg style="position:absolute;left:1906px;top:111px" width="16" height="901" fill="none" stroke="#555" stroke-width="2"><path d="M3 11l5-4 5 4M3 891l5 5 5-5"/></svg>
<div style="left:1922px;top:32px;width:3px;height:980px;background:#fff"></div>

<!-- bottom -->
<div style="left:0;top:1012px;width:1932px;height:33px;background:#f0f0f0"></div>
<div style="left:7px;top:1012px;width:1918px;height:1px;background:#e8e8e8"></div>
<div style="left:8px;top:1013px;width:214px;height:23px;background:#f6f6f6;border-right:1px solid #aaa;border-bottom:1px solid #aaa;box-sizing:border-box;line-height:24px;text-indent:4px;overflow:hidden;font-size:10.6px;word-spacing:1px">ESZ20_FUT_CME/MESZ20_FUT_CME  #1</div>
<div style="left:223px;top:1013px;width:35px;height:23px;background:#f6f6f6;border-right:1px solid #aaa;box-sizing:border-box;line-height:24px;text-align:center">ATAS</div>
<div style="left:259px;top:1014px;width:25px;height:22px;background:#0078d7;color:#fff;line-height:22px;text-align:center">OIL</div>
<div style="left:113px;top:1038px;width:285px;height:7px;background:#fafafa"></div>
<div style="left:398px;top:1038px;width:1534px;height:7px;background:#dfe2e8"></div>
<div style="left:978px;top:1023px;width:947px;height:15px;background:#fff;border-top:1px solid #b0b0b0;box-sizing:border-box;overflow:hidden">
<div style="left:8px;top:2px;width:14px;height:14px;background:#7a9cc0;border:1px solid #999;box-sizing:border-box"></div>
<div style="left:29px;top:4px;color:#888;font-size:12px;line-height:15px">Task Control</div>
</div>
<div style="left:0;top:1030px;width:113px;height:15px;background:#000;color:#fff;font-size:12.4px;line-height:15px">www.sierrachart.com</div>
</body></html>
